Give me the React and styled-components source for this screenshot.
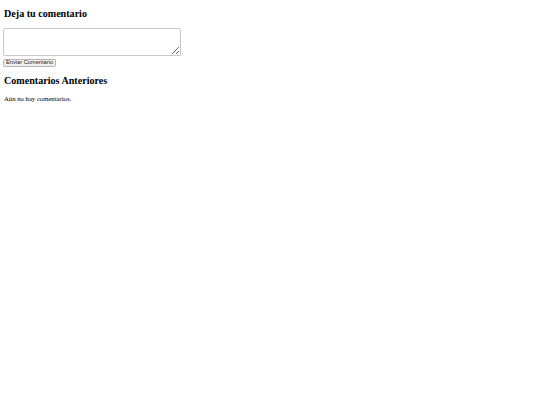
import { createGlobalStyle } from "styled-components";
import styled from "styled-components";

const GlobalStyle = createGlobalStyle`
  html, body {
    margin: 0;
    padding: 0;
  }
  body {
    font-family: "Liberation Serif", "Times New Roman", serif;
    font-size: 8px;
    color: #000;
    background: #fff;
  }
`;

const Page = styled.main`
  display: flow-root;
  padding: 0 4px;
`;

const Section = styled.section``;

const Heading = styled.h3`
  font-size: 10.1px;
  font-weight: bold;
  margin: 9.36px 0;
  line-height: 9.3px;
`;

const CommentForm = styled.form`
  display: flex;
  flex-direction: column;
  align-items: flex-start;
  gap: 2.7px;
`;

const CommentBox = styled.textarea`
  box-sizing: border-box;
  display: block;
  width: 178px;
  height: 28px;
  margin: 0 0 0 -1px;
  padding: 1px;
  border: 1px solid #c8c8c8;
  border-radius: 1px;
  font-family: "Liberation Mono", monospace;
  font-size: 6.67px;
  resize: both;
`;

const SubmitButton = styled.button`
  box-sizing: border-box;
  height: 8px;
  padding: 0 2px;
  margin: 0 0 0 -1px;
  font-family: "Liberation Sans", Arial, sans-serif;
  font-size: 5.7px;
  line-height: 1;
  color: #222;
  background: #f0f0f0;
  border: 1px solid #b4b4b4;
  border-radius: 1.5px;
`;

const EmptyNote = styled.p`
  margin: 8px 0;
  font-size: 6.7px;
  line-height: 8px;
`;

export default function App() {
  return (
    <>
      <GlobalStyle />
      <Page>
        <Section>
          <Heading>Deja tu comentario</Heading>
          <CommentForm onSubmit={(e) => e.preventDefault()}>
            <CommentBox />
            <SubmitButton type="submit">Enviar Comentario</SubmitButton>
          </CommentForm>
        </Section>
        <Section>
          <Heading>Comentarios Anteriores</Heading>
          <EmptyNote>Aún no hay comentarios.</EmptyNote>
        </Section>
      </Page>
    </>
  );
}
